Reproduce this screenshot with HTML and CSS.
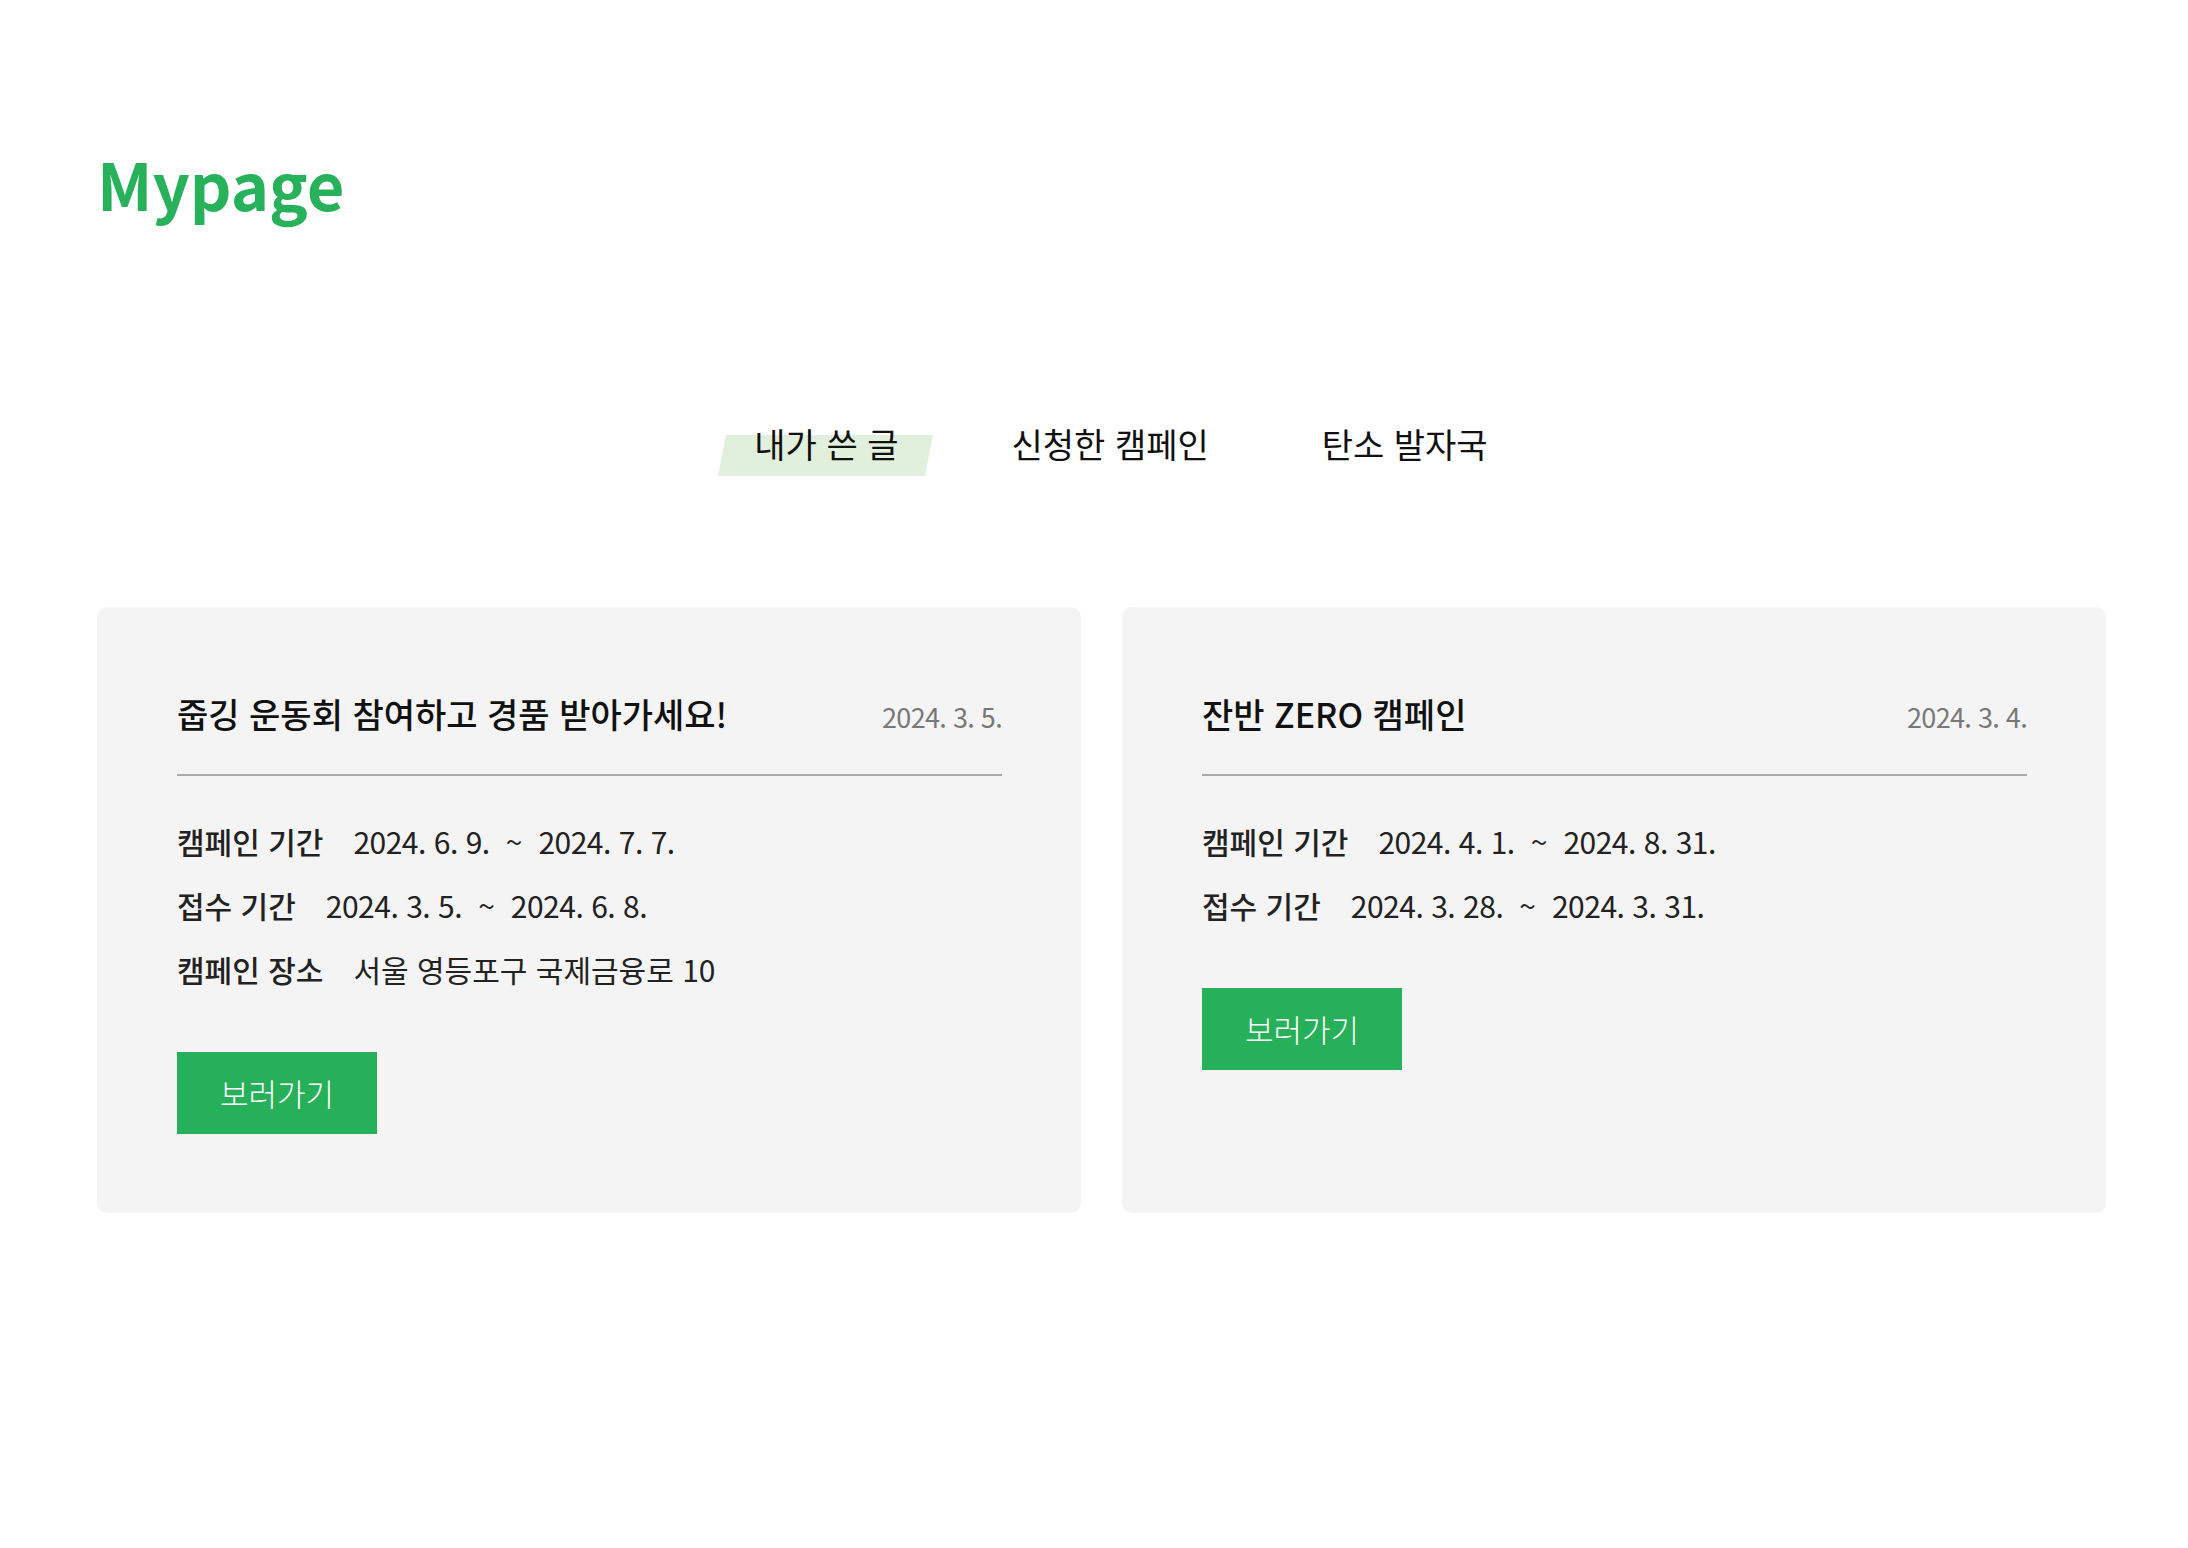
FILE: index.html
```html
<!DOCTYPE html>
<html lang="ko">
<head>
<meta charset="utf-8">
<title>Mypage</title>
<link rel="stylesheet" href="styles.css">
</head>
<body>
<div class="page">
  <h1 class="page-title">Mypage</h1>

  <nav class="tabs">
    <a class="tab tab-active">내가 쓴 글</a>
    <a class="tab">신청한 캠페인</a>
    <a class="tab">탄소 발자국</a>
  </nav>

  <section class="cards">
    <article class="card">
      <header class="card-head">
        <h2 class="card-title">줍깅 운동회 참여하고 경품 받아가세요!</h2>
        <span class="card-date">2024. 3. 5.</span>
      </header>
      <ul class="info">
        <li class="info-row"><span class="info-label">캠페인 기간</span><span class="date">2024. 6. 9.</span><span class="tilde">~</span><span class="date">2024. 7. 7.</span></li>
        <li class="info-row"><span class="info-label">접수 기간</span><span class="date">2024. 3. 5.</span><span class="tilde">~</span><span class="date">2024. 6. 8.</span></li>
        <li class="info-row"><span class="info-label">캠페인 장소</span><span class="info-value">서울 영등포구 국제금융로 10</span></li>
      </ul>
      <a class="btn">보러가기</a>
    </article>

    <article class="card">
      <header class="card-head">
        <h2 class="card-title">잔반 ZERO 캠페인</h2>
        <span class="card-date">2024. 3. 4.</span>
      </header>
      <ul class="info">
        <li class="info-row"><span class="info-label">캠페인 기간</span><span class="date">2024. 4. 1.</span><span class="tilde">~</span><span class="date">2024. 8. 31.</span></li>
        <li class="info-row"><span class="info-label">접수 기간</span><span class="date">2024. 3. 28.</span><span class="tilde">~</span><span class="date">2024. 3. 31.</span></li>
      </ul>
      <a class="btn">보러가기</a>
    </article>
  </section>
</div>
</body>
</html>
```

FILE: styles.css
```css
* { box-sizing: border-box; }

html, body {
  margin: 0;
  padding: 0;
  background: #ffffff;
}

body {
  font-family: "Noto Sans CJK KR", "Noto Sans", sans-serif;
  color: #222222;
}

.page {
  padding: 150px 82px 0 97px;
}

.page-title {
  margin: 0;
  font-size: 65px;
  line-height: 66px;
  font-weight: 700;
  color: #27b15b;
}

.tabs {
  display: flex;
  justify-content: center;
  gap: 39px;
  margin-top: 204px;
  padding-left: 39px;
}

.tab {
  position: relative;
  z-index: 0;
  padding: 0 37px;
  font-size: 34px;
  line-height: 48px;
  font-weight: 400;
  color: #111111;
  cursor: pointer;
}

.tab-active::before {
  content: "";
  position: absolute;
  left: 5px;
  right: 6px;
  top: 15px;
  height: 41px;
  background: #e1f0dc;
  transform: skewX(-11deg);
  z-index: -1;
}

.cards {
  display: grid;
  grid-template-columns: 1fr 1fr;
  gap: 41px;
  margin-top: 139px;
}

.card {
  background: #f4f4f4;
  border-radius: 10px;
  padding: 80px 79px 79px 80px;
}

.card-head {
  display: flex;
  justify-content: space-between;
  align-items: baseline;
  padding-bottom: 33px;
  border-bottom: 2px solid #aaaaaa;
}

.card-title {
  margin: 0;
  font-size: 34px;
  line-height: 54px;
  font-weight: 500;
  color: #111111;
}

.card-date {
  font-size: 27px;
  letter-spacing: -0.7px;
  color: #787878;
}

.info {
  list-style: none;
  margin: 33px 0 0;
  padding: 0;
}

.info-row {
  font-size: 30px;
  line-height: 64px;
  color: #222222;
  white-space: nowrap;
}

.info-label {
  font-weight: 500;
  margin-right: 30px;
}

.date {
  letter-spacing: -0.5px;
}

.tilde {
  margin: 0 16px;
}

.btn {
  display: inline-block;
  margin-top: 51px;
  padding: 0 43px;
  line-height: 82px;
  font-size: 31px;
  font-weight: 300;
  color: #ffffff;
  background: #27b05a;
  cursor: pointer;
}
```
